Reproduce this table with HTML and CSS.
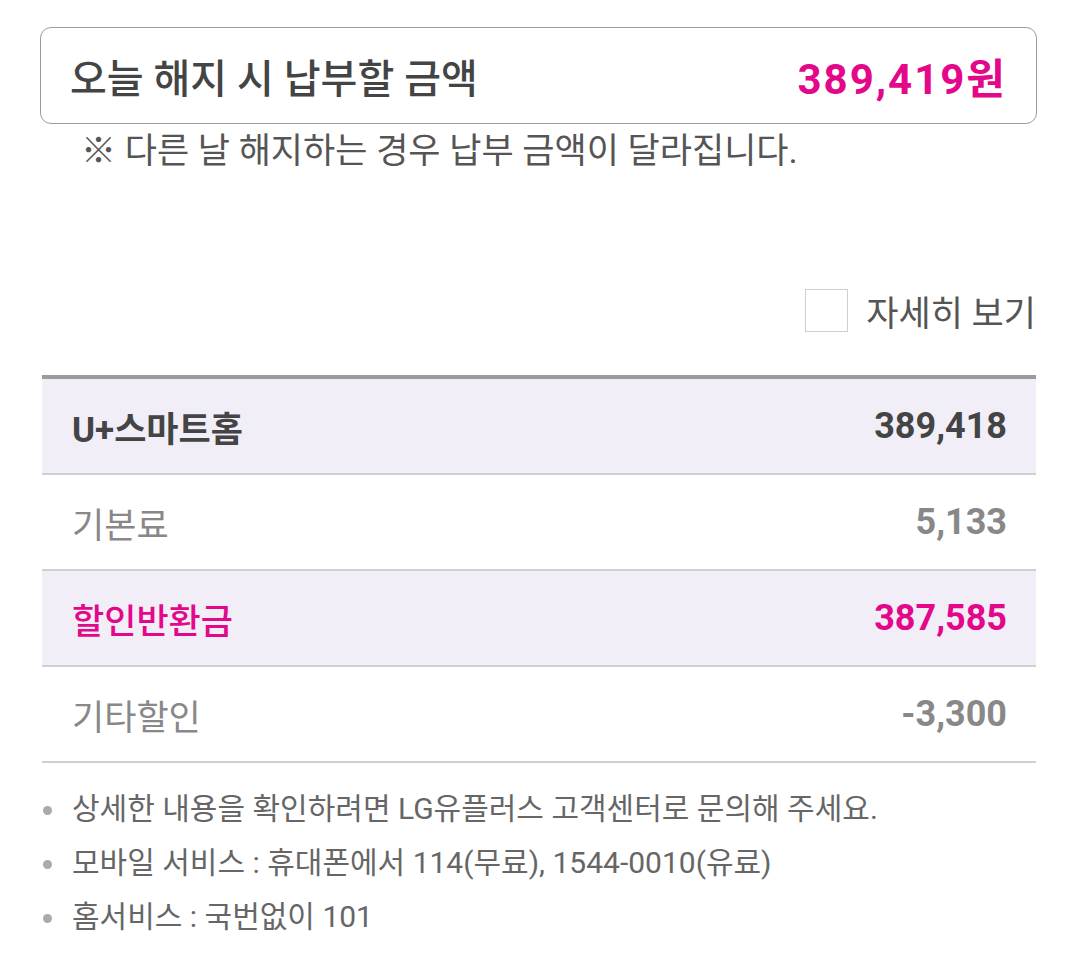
FILE: index.html
```html
<!DOCTYPE html>
<html lang="ko">
<head>
<meta charset="utf-8">
<link rel="stylesheet" href="styles.css">
</head>
<body>
<div class="page">
  <div class="summary">
    <span class="summary-title">오늘 해지 시 납부할 금액</span>
    <span class="summary-amount">389,419원</span>
  </div>
  <p class="note">※ 다른 날 해지하는 경우 납부 금액이 달라집니다.</p>

  <label class="detail-toggle">
    <span class="checkbox"></span>
    <span class="detail-label">자세히 보기</span>
  </label>

  <div class="fee-table">
    <div class="fee-row shaded total">
      <span class="fee-name">U+스마트홈</span>
      <span class="fee-value">389,418</span>
    </div>
    <div class="fee-row plain">
      <span class="fee-name">기본료</span>
      <span class="fee-value">5,133</span>
    </div>
    <div class="fee-row shaded accent">
      <span class="fee-name">할인반환금</span>
      <span class="fee-value">387,585</span>
    </div>
    <div class="fee-row plain">
      <span class="fee-name">기타할인</span>
      <span class="fee-value">-3,300</span>
    </div>
  </div>

  <ul class="info-list">
    <li>상세한 내용을 확인하려면 LG유플러스 고객센터로 문의해 주세요.</li>
    <li>모바일 서비스 : 휴대폰에서 114(무료), 1544-0010(유료)</li>
    <li>홈서비스 : 국번없이 101</li>
  </ul>
</div>
</body>
</html>
```
FILE: styles.css
```css
html, body {
  margin: 0;
  padding: 0;
  background: #ffffff;
}

body {
  font-family: Roboto, "Noto Sans CJK KR", sans-serif;
  color: #444;
}

.page {
  padding: 27px 43px 0 40px;
}

.summary {
  height: 95px;
  border: 1.5px solid #9c9c9c;
  border-radius: 11px;
  display: flex;
  align-items: center;
  justify-content: space-between;
  padding: 0 31px 0 29px;
}

.summary-title {
  font-size: 40px;
  font-weight: 500;
  color: #444;
}

.summary-amount {
  font-size: 42px;
  font-weight: 700;
  color: #e3078a;
  letter-spacing: 2px;
  margin-right: -2px;
}

.note {
  margin: 6px 0 0 41px;
  font-size: 35px;
  line-height: 44px;
  color: #555;
}

.detail-toggle {
  display: flex;
  justify-content: flex-end;
  align-items: center;
  gap: 18px;
  margin-top: 111px;
}

.checkbox {
  width: 43px;
  height: 43px;
  border: 1.5px solid #cfcfcf;
  box-sizing: border-box;
  background: #fff;
}

.detail-label {
  font-size: 35px;
  color: #555;
  margin-right: 1px;
}

.fee-table {
  margin: 39px 1px 0 2px;
  border-top: 4px solid #9b9b9e;
}

.fee-row {
  height: 94px;
  display: flex;
  align-items: center;
  justify-content: space-between;
  padding: 0 29px 0 30px;
  border-bottom: 2px solid #d0d0d4;
}

.shaded {
  background: #f1eef8;
}

.fee-name {
  font-size: 35px;
}

.fee-value {
  font-size: 36px;
  font-weight: 700;
}

.total .fee-name {
  font-weight: 700;
  color: #444;
}

.total .fee-value {
  color: #444;
}

.plain .fee-name {
  color: #888;
}

.plain .fee-value {
  color: #888;
}

.accent .fee-name {
  font-weight: 500;
  color: #e3078a;
}

.accent .fee-value {
  color: #e3078a;
}

.info-list {
  list-style: none;
  margin: 19px 0 0 0;
  padding: 0;
}

.info-list li {
  position: relative;
  padding-left: 32px;
  font-size: 30px;
  line-height: 54px;
  color: #666;
}

.info-list li::before {
  content: "";
  position: absolute;
  left: 3px;
  top: 24px;
  width: 9px;
  height: 9px;
  border-radius: 50%;
  background: #aaa;
}
```
